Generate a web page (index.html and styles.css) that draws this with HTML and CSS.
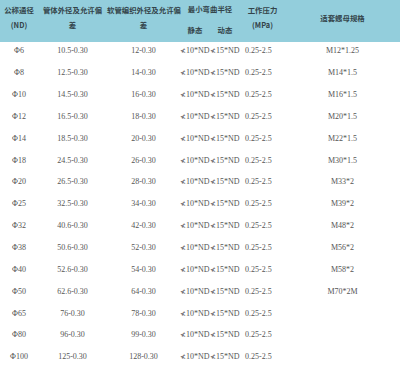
FILE: index.html
```html
<!DOCTYPE html>
<html lang="zh-CN">
<head>
  <meta charset="UTF-8" />
  <title>软管规格表</title>
  <link rel="stylesheet" href="styles.css">
</head>
<body>
  <table class="spec-table">
    <colgroup>
      <col class="c-nd">
      <col class="c-pipe">
      <col class="c-hose">
      <col class="c-bend">
      <col class="c-bend">
      <col class="c-press">
      <col class="c-nut">
    </colgroup>
    <thead>
      <tr class="head-top">
        <th rowspan="2" class="tall">公称通径<br>(ND)</th>
        <th rowspan="2" class="tall">管体外径及允许偏<br>差</th>
        <th rowspan="2" class="tall">软管编织外径及允许偏<br>差</th>
        <th colspan="2" class="bend">最小弯曲半径</th>
        <th rowspan="2" class="tall">工作压力<br>(MPa)</th>
        <th rowspan="2" class="tall">适套螺母规格</th>
      </tr>
      <tr class="head-sub">
        <th>静态</th>
        <th>动态</th>
      </tr>
    </thead>
    <tbody>
      <tr><td>Φ6</td><td>10.5-0.30</td><td>12-0.30</td><td class="r"><span class="ng">≮</span>10*ND</td><td class="l"><span class="ng">≮</span>15*ND</td><td class="p">0.25-2.5</td><td>M12*1.25</td></tr>
      <tr><td>Φ8</td><td>12.5-0.30</td><td>14-0.30</td><td class="r"><span class="ng">≮</span>10*ND</td><td class="l"><span class="ng">≮</span>15*ND</td><td class="p">0.25-2.5</td><td>M14*1.5</td></tr>
      <tr><td>Φ10</td><td>14.5-0.30</td><td>16-0.30</td><td class="r"><span class="ng">≮</span>10*ND</td><td class="l"><span class="ng">≮</span>15*ND</td><td class="p">0.25-2.5</td><td>M16*1.5</td></tr>
      <tr><td>Φ12</td><td>16.5-0.30</td><td>18-0.30</td><td class="r"><span class="ng">≮</span>10*ND</td><td class="l"><span class="ng">≮</span>15*ND</td><td class="p">0.25-2.5</td><td>M20*1.5</td></tr>
      <tr><td>Φ14</td><td>18.5-0.30</td><td>20-0.30</td><td class="r"><span class="ng">≮</span>10*ND</td><td class="l"><span class="ng">≮</span>15*ND</td><td class="p">0.25-2.5</td><td>M22*1.5</td></tr>
      <tr><td>Φ18</td><td>24.5-0.30</td><td>26-0.30</td><td class="r"><span class="ng">≮</span>10*ND</td><td class="l"><span class="ng">≮</span>15*ND</td><td class="p">0.25-2.5</td><td>M30*1.5</td></tr>
      <tr><td>Φ20</td><td>26.5-0.30</td><td>28-0.30</td><td class="r"><span class="ng">≮</span>10*ND</td><td class="l"><span class="ng">≮</span>15*ND</td><td class="p">0.25-2.5</td><td>M33*2</td></tr>
      <tr><td>Φ25</td><td>32.5-0.30</td><td>34-0.30</td><td class="r"><span class="ng">≮</span>10*ND</td><td class="l"><span class="ng">≮</span>15*ND</td><td class="p">0.25-2.5</td><td>M39*2</td></tr>
      <tr><td>Φ32</td><td>40.6-0.30</td><td>42-0.30</td><td class="r"><span class="ng">≮</span>10*ND</td><td class="l"><span class="ng">≮</span>15*ND</td><td class="p">0.25-2.5</td><td>M48*2</td></tr>
      <tr><td>Φ38</td><td>50.6-0.30</td><td>52-0.30</td><td class="r"><span class="ng">≮</span>10*ND</td><td class="l"><span class="ng">≮</span>15*ND</td><td class="p">0.25-2.5</td><td>M56*2</td></tr>
      <tr><td>Φ40</td><td>52.6-0.30</td><td>54-0.30</td><td class="r"><span class="ng">≮</span>10*ND</td><td class="l"><span class="ng">≮</span>15*ND</td><td class="p">0.25-2.5</td><td>M58*2</td></tr>
      <tr><td>Φ50</td><td>62.6-0.30</td><td>64-0.30</td><td class="r"><span class="ng">≮</span>10*ND</td><td class="l"><span class="ng">≮</span>15*ND</td><td class="p">0.25-2.5</td><td>M70*2M</td></tr>
      <tr><td>Φ65</td><td>76-0.30</td><td>78-0.30</td><td class="r"><span class="ng">≮</span>10*ND</td><td class="l"><span class="ng">≮</span>15*ND</td><td class="p">0.25-2.5</td><td></td></tr>
      <tr><td>Φ80</td><td>96-0.30</td><td>99-0.30</td><td class="r"><span class="ng">≮</span>10*ND</td><td class="l"><span class="ng">≮</span>15*ND</td><td class="p">0.25-2.5</td><td></td></tr>
      <tr><td>Φ100</td><td>125-0.30</td><td>128-0.30</td><td class="r"><span class="ng">≮</span>10*ND</td><td class="l"><span class="ng">≮</span>15*ND</td><td class="p">0.25-2.5</td><td></td></tr>
    </tbody>
  </table>
</body>
</html>
```

FILE: styles.css
```css
/* 基础 */
* {
  margin: 0;
  padding: 0;
  box-sizing: border-box;
}

body {
  background: #fff;
  font-family: "Liberation Serif", "Noto Sans CJK SC", serif;
  overflow: hidden;
}

/* 规格表 */
.spec-table {
  width: 400px;
  table-layout: fixed;
  border-collapse: collapse;
}

.c-nd { width: 38px; }
.c-pipe { width: 69px; }
.c-hose { width: 73px; }
.c-bend { width: 30px; }
.c-press { width: 45px; }
.c-nut { width: 115px; }

.spec-table thead {
  background: #93cedc;
}

.spec-table th {
  font-family: "Noto Sans CJK SC", sans-serif;
  font-size: 7.4px;
  font-weight: 700;
  color: #33444a;
  text-align: center;
  white-space: nowrap;
  padding: 0;
}

.spec-table th.tall {
  line-height: 15px;
  padding-bottom: 8px;
  vertical-align: middle;
}

.head-top {
  height: 16px;
}

.head-top th.bend {
  vertical-align: top;
  padding-top: 3px;
}

.head-sub {
  height: 26px;
}

.head-sub th {
  vertical-align: middle;
  padding-top: 1px;
}

/* 数据行 */
.spec-table td {
  height: 21.85px;
  font-size: 8px;
  color: #555;
  text-align: center;
  white-space: nowrap;
  padding: 0 0 4px;
  vertical-align: middle;
}

.spec-table td .ng {
  font-family: "DejaVu Sans", sans-serif;
  font-size: 7px;
}

.spec-table td.r {
  text-align: right;
  padding-right: 1px;
}

.spec-table td.l {
  text-align: left;
  padding-left: 0;
}

.spec-table td.p {
  text-align: left;
  padding-left: 5px;
}
```
